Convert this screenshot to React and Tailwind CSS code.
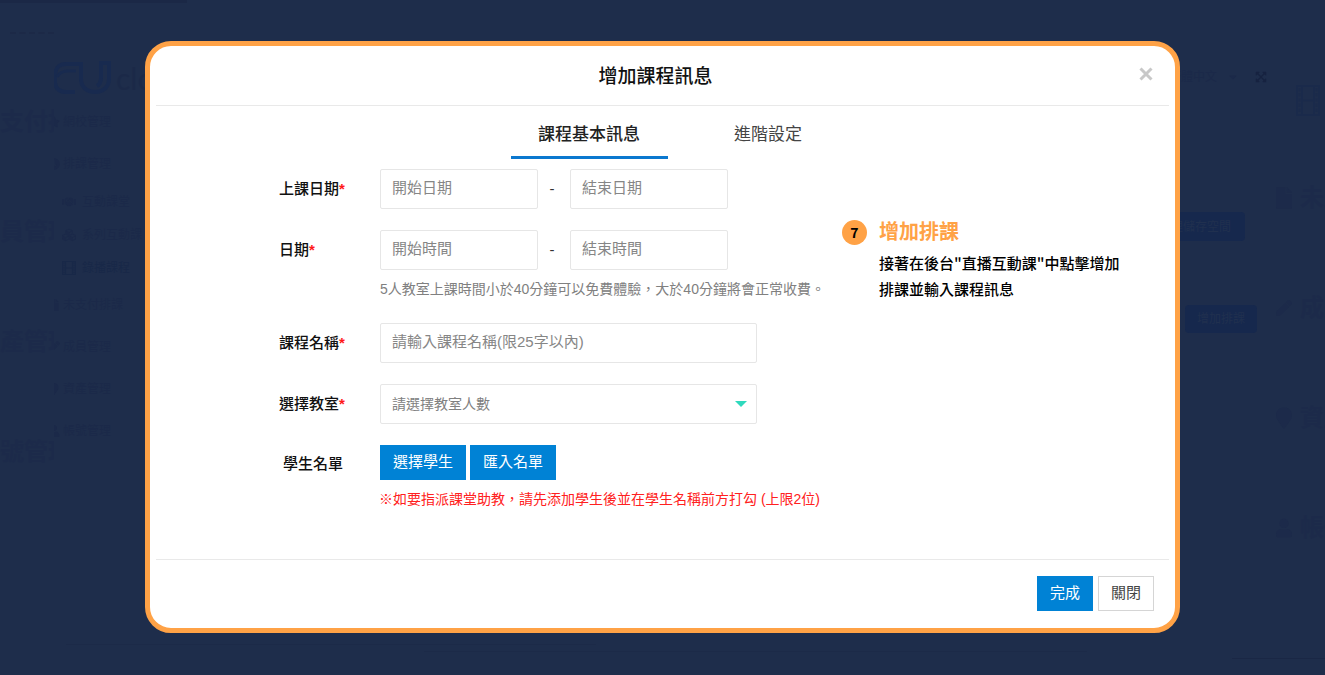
import { FaCaretDown, FaClock, FaCubes, FaExpandArrowsAlt, FaFile, FaHandshake, FaMapMarker, FaPen, FaStar, FaUser } from "react-icons/fa";

const bigLeft = ["支付排", "員管理", "產管理", "號管理"];

const bigRight = [
  { Icon: FaFile, text: "未支付" },
  { Icon: FaPen, text: "成員" },
  { Icon: FaMapMarker, text: "資產" },
  { Icon: FaUser, text: "帳號" },
];

function Film({ className }) {
  return (
    <svg viewBox="0 0 24 30" preserveAspectRatio="none" className={className} fill="none" stroke="currentColor">
      <path d="M1 1h22v28H1zM6 1v28M18 1v28M6 15h12" strokeWidth="2" />
      <path d="M3.5 3v24M20.5 3v24" strokeWidth="2" strokeDasharray="3 2" />
    </svg>
  );
}

const menu = [
  { text: "網校管理", Icon: FaStar },
  { text: "排課管理", Icon: FaClock },
  { text: "互動課堂", Icon: FaHandshake, sub: true },
  { text: "系列互動課", Icon: FaCubes, sub: true },
  { text: "錄播課程", Icon: Film, sub: true, active: true },
  { text: "未支付排課", Icon: FaFile },
  { text: "成員管理", Icon: FaPen },
  { text: "資產管理", Icon: FaMapMarker },
  { text: "帳號管理", Icon: FaUser },
];

function Logo() {
  return (
    <svg viewBox="0 0 58 34" className="h-[34px] w-[58px] shrink-0" fill="none" stroke="#182a4f" role="img" aria-label="EU">
      <path d="M29 3H12C5 3 2 6 1 13v9c1 6 5 9 11 9h9" strokeWidth="4" />
      <path d="M22 10H14c-5 0-9 2-11 6" strokeWidth="3" />
      <path d="M27 1v17c0 8 6 13 14 13s14-5 14-13V2H47v15c0 4-1 6-4 8" strokeWidth="4" />
    </svg>
  );
}

function Backdrop() {
  return (
    <div className="col-start-1 row-start-1 grid grid-cols-[54px_1fr_49px] content-between self-stretch overflow-hidden text-[#1b2949]">
      <div className="overflow-hidden">
        <div className="h-[3px] bg-[#1b2846]" />
        <div className="mt-[29px] ml-2.5 w-11 border-t-2 border-dashed border-[#1c2947]" />
        <div className="mt-[70px] flex flex-col gap-[74px] text-[24px] leading-9 font-bold whitespace-nowrap text-[#1c2a4a]">
          {bigLeft.map((t) => (
            <span key={t}>{t}</span>
          ))}
        </div>
      </div>
      <div className="flex items-start justify-between">
        <div>
          <div className="h-[3px] w-[133px] bg-[#1b2846]" />
          <div className="mt-[57px] flex h-[36px] items-center gap-1 text-[30px] text-[#1b2948]">
            <Logo />
            <span className="font-['Lato',sans-serif]">cloud</span>
          </div>
          <nav className="mt-[5px] text-[12px]">
            {menu.map(({ text, Icon, sub, active }) => (
              <a
                key={text}
                href="#"
                className={
                  sub
                    ? active
                      ? "flex h-[33px] items-center gap-1.5 pl-2 text-[#182848]"
                      : "flex h-[33px] items-center gap-1.5 pl-2"
                    : "flex h-[42px] items-center gap-[3px]"
                }
              >
                {sub ? (
                  <Icon className="size-3.5" />
                ) : (
                  <span className="flex w-1.5 justify-end overflow-hidden">
                    <Icon className="size-3 shrink-0" />
                  </span>
                )}
                {text}
              </a>
            ))}
          </nav>
        </div>
        <div className="flex flex-col items-end pt-[60px] text-[12px]">
          <div className="flex h-[34px] items-center pr-[9px]">
            <span>繁體中文</span>
            <FaCaretDown className="ml-2.5" />
            <FaExpandArrowsAlt className="ml-4 size-3 text-[#162240]" />
          </div>
          <button className="mt-[118px] mr-[31px] h-[29px] rounded bg-[#16284d] px-3.5 text-[#20304f]">管理儲存空間</button>
          <button className="mt-[64px] mr-[19px] h-[28px] rounded bg-[#16284d] px-3 text-[#20304f]">增加排課</button>
        </div>
      </div>
      <div className="overflow-hidden pt-[85px]">
        <Film className="ml-5 h-[31px] w-6 text-[#1a2a4b]" />
        <div className="mt-[64px] flex flex-col gap-[74px] text-[24px] leading-9 font-bold whitespace-nowrap text-[#1c2a4a]">
          {bigRight.map(({ Icon, text }) => (
            <span key={text} className="flex items-center gap-2">
              <Icon className="h-6 w-4 shrink-0" />
              {text}
            </span>
          ))}
        </div>
      </div>
      <div className="col-span-3 flex flex-col gap-[6px] pb-4">
        <div className="ml-[5%] h-px w-2/5 bg-[#1c2a48]" />
        <div className="ml-[32%] h-px w-1/2 bg-[#1c2a48]" />
        <div className="ml-[93%] h-px bg-[#1a2745]" />
      </div>
    </div>
  );
}

const box = "block h-10 w-full rounded-xs border border-[#e6e6e6] bg-white px-[11px] pb-[3px] text-[15px] text-[#555] placeholder:text-[#868686] outline-none";

function Label({ htmlFor, children }) {
  return (
    <label htmlFor={htmlFor} className="w-[101px] shrink-0 text-[15px] font-medium text-[#111]">
      {children}
      <span className="font-bold text-[#ff1a1a]">*</span>
    </label>
  );
}

function RangeRow({ id, label, from, to }) {
  return (
    <div className="flex items-center">
      <Label htmlFor={id}>{label}</Label>
      <div className="w-[158px]">
        <input id={id} placeholder={from} className={box} />
      </div>
      <span className="w-8 pr-1 text-center text-[15px] text-[#333]">-</span>
      <div className="w-[158px]">
        <input aria-label={to} placeholder={to} className={box} />
      </div>
    </div>
  );
}

function Dialog() {
  return (
    <section
      role="dialog"
      aria-labelledby="dialog-title"
      className="z-10 col-start-1 row-start-1 mx-[145px] mt-[41px] mb-[42px] rounded-[26px] border-5 border-[#ffa246] bg-white"
    >
      <header className="mx-1.5 flex h-[60px] items-center border-b border-[#e9e9e9] pr-4 pl-4">
        <h1 id="dialog-title" className="flex-1 pt-1 text-center text-[19px] font-medium text-[#111]">
          增加課程訊息
        </h1>
        <button aria-label="關閉視窗" className="pb-1 text-[#c8c8c8]">
          <svg viewBox="0 0 14 14" className="size-3.5" fill="none" stroke="currentColor" strokeWidth="3">
            <path d="M1.5 1.5l11 11M12.5 1.5l-11 11" />
          </svg>
        </button>
      </header>

      <div role="tablist" className="flex justify-center gap-[22px] pl-8 text-[17px]">
        <button role="tab" aria-selected="true" className="h-[53px] w-[157px] border-b-3 border-[#0b78cf] pt-2 font-medium text-[#222]">
          課程基本訊息
        </button>
        <button role="tab" aria-selected="false" className="h-[53px] w-[157px] border-b-3 border-transparent pt-2 text-[#444]">
          進階設定
        </button>
      </div>

      <div className="grid grid-cols-[563fr_333fr] pt-2.5 pb-[50px] pl-[129px]">
        <form className="flex flex-col gap-[21px]">
          <RangeRow id="date" label="上課日期" from="開始日期" to="結束日期" />
          <div className="mb-[3px]">
            <RangeRow id="time" label="日期" from="開始時間" to="結束時間" />
            <p className="mt-[9px] ml-[101px] text-[14px] leading-5 whitespace-nowrap text-[#808080]">
              5人教室上課時間小於40分鐘可以免費體驗，大於40分鐘將會正常收費。
            </p>
          </div>
          <div className="flex items-center">
            <Label htmlFor="name">課程名稱</Label>
            <div className="w-[377px]">
              <input id="name" placeholder="請輸入課程名稱(限25字以內)" className={box} />
            </div>
          </div>
          <div className="flex items-center">
            <Label htmlFor="room">選擇教室</Label>
            <div className="grid w-[377px] items-center">
              <select
                id="room"
                className="col-start-1 row-start-1 h-10 w-full appearance-none rounded-xs border border-[#e6e6e6] bg-white px-[11px] text-[14px] text-[#808080]"
              >
                <option>請選擇教室人數</option>
              </select>
              <svg viewBox="0 0 12 6" className="pointer-events-none col-start-1 row-start-1 mr-2.5 h-1.5 w-3 justify-self-end" fill="#2fd9bd">
                <path d="M0 0h12L6 6z" />
              </svg>
            </div>
          </div>
          <div>
            <div className="flex items-center">
              <span className="w-[101px] pt-1 pl-1 text-[15px] font-medium text-[#111]">學生名單</span>
              <div className="flex gap-1 text-[15px] text-white">
                <button type="button" className="h-[35px] bg-[#0082d5] px-[13px]">選擇學生</button>
                <button type="button" className="h-[35px] bg-[#0082d5] px-[13px]">匯入名單</button>
              </div>
            </div>
            <p className="mt-[9px] ml-[100px] text-[14px] leading-5 whitespace-nowrap text-[#ff2020]">
              ※如要指派課堂助教，請先添加學生後並在學生名稱前方打勾 (上限2位)
            </p>
          </div>
        </form>

        <aside className="flex items-start gap-3 pt-[47px] font-['Noto_Sans_CJK_TC',sans-serif]">
          <span className="mt-1 flex size-[25px] shrink-0 items-center justify-center rounded-full bg-[#ffa246] text-[14px] font-bold text-black">7</span>
          <div>
            <h2 className="text-[20px] leading-[30px] font-bold text-[#ffa246]">增加排課</h2>
            <p className="mt-1 text-[15px] leading-[26px] font-medium whitespace-nowrap text-black">
              接著在後台"直播互動課"中點擊增加
              <br />
              排課並輸入課程訊息
            </p>
          </div>
        </aside>
      </div>

      <footer className="mx-1.5 flex justify-end gap-[5px] border-t border-[#e9e9e9] pt-4 pr-[15px] pb-[17px] text-[15px]">
        <button className="h-[35px] bg-[#0082d5] px-[13px] text-white">完成</button>
        <button className="h-[35px] border border-[#d5d5d5] bg-white px-3 text-[#444]">關閉</button>
      </footer>
    </section>
  );
}

export default function App() {
  return (
    <main className="grid min-h-screen items-start overflow-hidden bg-[#1e2d4b] font-['Liberation_Sans','Noto_Sans_CJK_TC',sans-serif]">
      <Backdrop />
      <Dialog />
    </main>
  );
}
